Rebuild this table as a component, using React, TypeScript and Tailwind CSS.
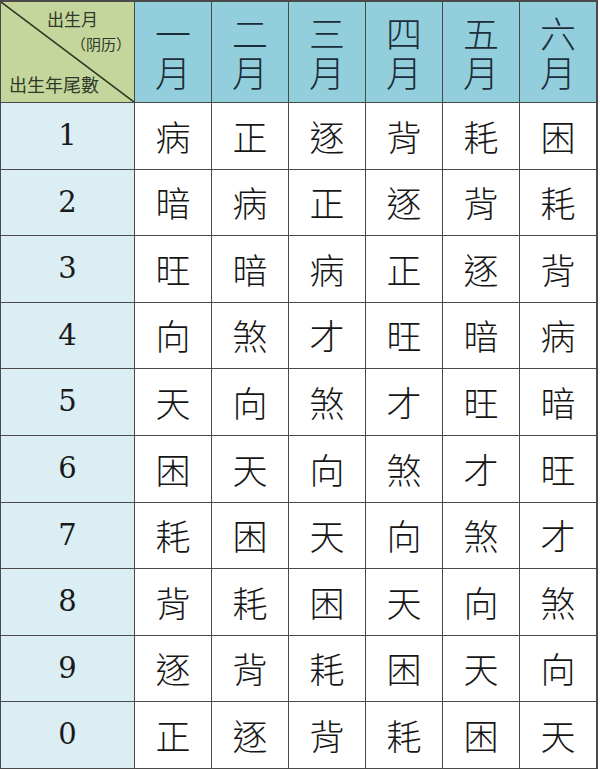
const months = ["一", "二", "三", "四", "五", "六"];

const rows: [string, string[]][] = [
  ["1", ["病", "正", "逐", "背", "耗", "困"]],
  ["2", ["暗", "病", "正", "逐", "背", "耗"]],
  ["3", ["旺", "暗", "病", "正", "逐", "背"]],
  ["4", ["向", "煞", "才", "旺", "暗", "病"]],
  ["5", ["天", "向", "煞", "才", "旺", "暗"]],
  ["6", ["困", "天", "向", "煞", "才", "旺"]],
  ["7", ["耗", "困", "天", "向", "煞", "才"]],
  ["8", ["背", "耗", "困", "天", "向", "煞"]],
  ["9", ["逐", "背", "耗", "困", "天", "向"]],
  ["0", ["正", "逐", "背", "耗", "困", "天"]],
];

const cjk = "font-['Noto_Sans_CJK_TC','Noto_Sans_CJK_SC',sans-serif]";

export default function App() {
  return (
    <div className="h-[769px] w-[600px] bg-white">
      <div className="grid h-[769px] w-[598px] grid-cols-[133px_repeat(6,1fr)] grid-rows-[100px_repeat(10,1fr)] gap-[1px] border-t-2 border-r-2 border-b border-l border-[#4a4a4a] bg-[#4a4a4a]">
        {/* corner cell with diagonal */}
        <div className={`relative flex flex-col justify-between bg-[#c4d69c] pt-[8px] pr-[3px] pb-[9px] pl-[8px] leading-none text-[#2e3a2a] ${cjk}`}>
          <svg className="absolute inset-0 h-full w-full" viewBox="0 0 133 100" preserveAspectRatio="none">
            <line x1="0" y1="0" x2="133" y2="100" stroke="#2f3a22" strokeWidth="1.6" />
          </svg>
          <div className="flex flex-col items-end gap-[9px]">
            <span className="mr-[33px] text-[17px]">出生月</span>
            <span className="text-[15px]">（阴历）</span>
          </div>
          <span className="text-[18px]">出生年尾數</span>
        </div>
        {months.map((m) => (
          <div
            key={m}
            className={`flex items-center justify-center bg-[#93cedd] text-center text-[36px] font-light leading-[39px] whitespace-pre-line text-[#1c2e3a] ${cjk}`}
          >
            {`${m}\n月`}
          </div>
        ))}
        {rows.map(([n, cells]) => (
          <div key={n} className="contents">
            <div className="flex items-center justify-center bg-[#dbeef4] font-['DejaVu_Serif',serif] text-[29px] text-[#1a1a1a]">
              {n}
            </div>
            {cells.map((c, i) => (
              <div
                key={i}
                className={`flex items-center justify-center bg-white text-[35px] font-light text-[#161616] ${cjk}`}
              >
                {c}
              </div>
            ))}
          </div>
        ))}
      </div>
    </div>
  );
}
